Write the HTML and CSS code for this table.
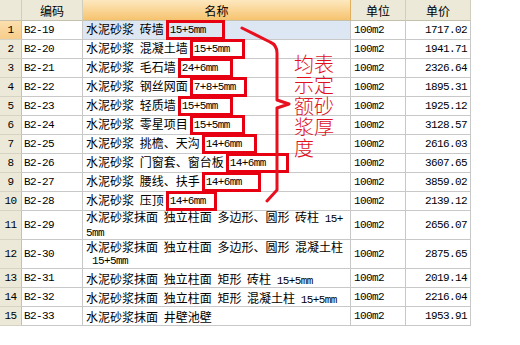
FILE: index.html
```html
<!DOCTYPE html>
<html>
<head>
<meta charset="utf-8">
<link rel="stylesheet" href="styles.css">
</head>
<body>
<div class="sheet">
  <div class="grid">
    <div class="row head">
      <div class="c num"></div>
      <div class="c code">编码</div>
      <div class="c name sel">名称</div>
      <div class="c unit">单位</div>
      <div class="c price">单价</div>
    </div>
    <div class="row">
      <div class="c num cur m">1</div><div class="c code m">B2-19</div>
      <div class="c name hl"><span class="t">水泥砂浆 砖墙<span class="mk wide m">15+5mm</span></span></div>
      <div class="c unit m">100m2</div><div class="c price m">1717.02</div>
    </div>
    <div class="row">
      <div class="c num m">2</div><div class="c code m">B2-20</div>
      <div class="c name"><span class="t">水泥砂浆 混凝土墙<span class="mk m">15+5mm</span></span></div>
      <div class="c unit m">100m2</div><div class="c price m">1941.71</div>
    </div>
    <div class="row">
      <div class="c num m">3</div><div class="c code m">B2-21</div>
      <div class="c name"><span class="t">水泥砂浆 毛石墙<span class="mk m">24+6mm</span></span></div>
      <div class="c unit m">100m2</div><div class="c price m">2326.64</div>
    </div>
    <div class="row">
      <div class="c num m">4</div><div class="c code m">B2-22</div>
      <div class="c name"><span class="t">水泥砂浆 钢丝网面<span class="mk narrow m">7+8+5mm</span></span></div>
      <div class="c unit m">100m2</div><div class="c price m">1895.31</div>
    </div>
    <div class="row">
      <div class="c num m">5</div><div class="c code m">B2-23</div>
      <div class="c name"><span class="t">水泥砂浆 轻质墙<span class="mk m">15+5mm</span></span></div>
      <div class="c unit m">100m2</div><div class="c price m">1925.12</div>
    </div>
    <div class="row">
      <div class="c num m">6</div><div class="c code m">B2-24</div>
      <div class="c name"><span class="t">水泥砂浆 零星项目<span class="mk m">15+5mm</span></span></div>
      <div class="c unit m">100m2</div><div class="c price m">3128.57</div>
    </div>
    <div class="row">
      <div class="c num m">7</div><div class="c code m">B2-25</div>
      <div class="c name"><span class="t">水泥砂浆 挑檐、天沟<span class="mk m">14+6mm</span></span></div>
      <div class="c unit m">100m2</div><div class="c price m">2616.03</div>
    </div>
    <div class="row">
      <div class="c num m">8</div><div class="c code m">B2-26</div>
      <div class="c name"><span class="t">水泥砂浆 门窗套、窗台板<span class="mk xwide m">14+6mm</span></span></div>
      <div class="c unit m">100m2</div><div class="c price m">3607.65</div>
    </div>
    <div class="row">
      <div class="c num m">9</div><div class="c code m">B2-27</div>
      <div class="c name"><span class="t">水泥砂浆 腰线、扶手<span class="mk wide m">14+6mm</span></span></div>
      <div class="c unit m">100m2</div><div class="c price m">3859.02</div>
    </div>
    <div class="row">
      <div class="c num m">10</div><div class="c code m">B2-28</div>
      <div class="c name"><span class="t">水泥砂浆 压顶<span class="mk narrow m">14+6mm</span></span></div>
      <div class="c unit m">100m2</div><div class="c price m">2139.12</div>
    </div>
    <div class="row tall">
      <div class="c num m">11</div><div class="c code m">B2-29</div>
      <div class="c name"><div class="t2">水泥砂浆抹面 独立柱面 多边形、圆形 砖柱 <span class="m">15+</span><br><span class="m">5mm</span></div></div>
      <div class="c unit m">100m2</div><div class="c price m">2656.07</div>
    </div>
    <div class="row tall">
      <div class="c num m">12</div><div class="c code m">B2-30</div>
      <div class="c name"><div class="t2">水泥砂浆抹面 独立柱面 多边形、圆形 混凝土柱<br><span class="m ind">15+5mm</span></div></div>
      <div class="c unit m">100m2</div><div class="c price m">2875.65</div>
    </div>
    <div class="row">
      <div class="c num m">13</div><div class="c code m">B2-31</div>
      <div class="c name"><span class="t">水泥砂浆抹面 独立柱面 矩形 砖柱 <span class="m">15+5mm</span></span></div>
      <div class="c unit m">100m2</div><div class="c price m">2019.14</div>
    </div>
    <div class="row">
      <div class="c num m">14</div><div class="c code m">B2-32</div>
      <div class="c name"><span class="t">水泥砂浆抹面 独立柱面 矩形 混凝土柱 <span class="m">15+5mm</span></span></div>
      <div class="c unit m">100m2</div><div class="c price m">2216.04</div>
    </div>
    <div class="row">
      <div class="c num m">15</div><div class="c code m">B2-33</div>
      <div class="c name"><span class="t">水泥砂浆抹面 井壁池壁</span></div>
      <div class="c unit m">100m2</div><div class="c price m">1953.91</div>
    </div>
  </div>
  <svg class="brace" width="520" height="345" viewBox="0 0 520 345">
    <path d="M242 28 L270 42 Q277 45 277 53 L277 100 L289 104 L277 108 L277 190 L267 201" fill="none" stroke="#e8101e" stroke-width="3" stroke-linejoin="round" stroke-linecap="round"/>
  </svg>
  <div class="note">均表示定额砂浆厚度</div>
</div>
</body>
</html>
```
FILE: styles.css
```css
html, body {
  margin: 0;
  padding: 0;
  background: #ffffff;
}
.sheet {
  position: relative;
  width: 520px;
  height: 345px;
  font-family: "Noto Sans CJK SC", sans-serif;
  font-size: 12px;
  font-weight: 400;
  color: #000;
}
.grid {
  display: flex;
  flex-direction: column;
  width: 471px;
}
.row {
  display: flex;
  height: 19px;
}
.row.head {
  height: 21px;
}
.row.tall {
  height: 29px;
}
.c {
  box-sizing: border-box;
  height: 100%;
  display: flex;
  align-items: center;
  white-space: nowrap;
  border-right: 1px solid #c8c8c8;
  border-bottom: 1px solid #c8c8c8;
}
.m {
  font-family: "Liberation Mono", monospace;
  font-size: 11px;
  font-weight: 400;
  letter-spacing: -0.6px;
}
.num {
  width: 22px;
  justify-content: center;
  background: #ece9d8;
  border-right-color: #c4c1b2;
  border-bottom-color: #d6d3c4;
}
.num.cur {
  background: linear-gradient(#fbdfae, #f7cd8a);
}
.code {
  width: 61px;
  padding-left: 2px;
}
.name {
  width: 268px;
  padding-left: 3px;
  overflow: visible;
}
.name.hl {
  background: #dde7f4;
}
.unit {
  width: 55px;
  padding-left: 3px;
}
.price {
  width: 65px;
  justify-content: flex-end;
  padding-right: 3px;
}
.head .c {
  background: #ece9d8;
  justify-content: center;
  padding: 0;
  font-size: 12px;
  font-weight: 400;
  border-right-color: #d2cebd;
  border-bottom-color: #c4c0ae;
}
.head .c.sel {
  background: linear-gradient(#fde8bf, #f6c36e);
  border-right-color: #e0b060;
}
.t {
  word-spacing: 3px;
}
.t2 {
  line-height: 12px;
  word-spacing: 3px;
}
.ind {
  padding-left: 6px;
}
.mk {
  display: inline-block;
  box-sizing: border-box;
  height: 20px;
  line-height: 14px;
  vertical-align: middle;
  margin-left: 2px;
  padding: 0 12px 0 1px;
  border: 3px solid #e60012;
  word-spacing: 0;
}
.mk.wide {
  padding-right: 16px;
}
.mk.xwide {
  padding-right: 20px;
}
.mk.narrow {
  padding-right: 8px;
}
.brace {
  position: absolute;
  left: 0;
  top: 0;
  pointer-events: none;
}
.note {
  position: absolute;
  left: 294px;
  top: 53px;
  width: 41px;
  font-size: 20px;
  line-height: 21px;
  font-weight: 300;
  color: #e0101e;
}
```
